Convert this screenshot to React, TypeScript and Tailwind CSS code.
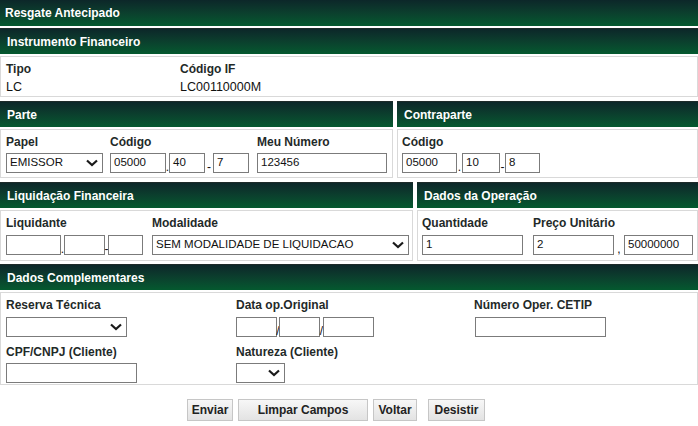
import React from 'react';

const font = { fontFamily: '"Liberation Sans", Arial, sans-serif' };

const Bar = ({ title, top = true }: { title: string; top?: boolean }) => (
    <div
        className={`h-[26px] flex items-center pl-[7px] text-white font-bold text-[12px] bg-gradient-to-b from-[#0c2729] to-[#04592f] ${top ? 'border-t border-[#1d2a29]' : ''}`}
    >
        {title}
    </div>
);

const Box = ({ children, className = '' }: { children: React.ReactNode; className?: string }) => (
    <div className={`mt-[2px] border border-[#d9d9d9] bg-white ${className}`}>{children}</div>
);

const Label = ({ children }: { children: React.ReactNode }) => (
    <div className="text-[12px] font-bold text-[#1f2a29] leading-[14px]">{children}</div>
);

const Input = ({ w, value = '' }: { w: number; value?: string }) => (
    <div
        className="h-[20px] border border-[#7b7b7b] bg-white flex items-center pl-[3px] text-[11.5px] text-[#111] shrink-0"
        style={{ width: w }}
    >
        {value}
    </div>
);

const Chevron = () => (
    <svg width="12" height="8" viewBox="0 0 12 8" className="shrink-0">
        <polyline points="1,1.5 6,6 11,1.5" fill="none" stroke="#1a1a1a" strokeWidth="2.2" />
    </svg>
);

const Select = ({ w, value = '' }: { w: number; value?: string }) => (
    <div
        className="h-[20px] border border-[#7b7b7b] bg-white flex items-center justify-between pl-[3px] pr-[4px] text-[11.5px] text-[#111] shrink-0"
        style={{ width: w }}
    >
        <span>{value}</span>
        <Chevron />
    </div>
);

// small "." / "-" / "/" between parts of a code, sitting at the bottom of the inputs
const Sep = ({ c, w }: { c: string; w: number }) => (
    <span className="h-[20px] flex items-end justify-center overflow-visible" style={{ width: w }}>
        <span className="text-[12px] leading-[12px] text-[#111]">{c}</span>
    </span>
);

const Btn = ({ children, w, className = '' }: { children: React.ReactNode; w: number; className?: string }) => (
    <button
        className={`h-[22px] border border-[#c6c6c6] bg-gradient-to-b from-[#f7f7f7] to-[#e3e3e3] text-[12px] font-bold text-[#222] ${className}`}
        style={{ width: w }}
    >
        {children}
    </button>
);

export default function App() {
    return (
        <div className="w-[698px] h-[426px] bg-white overflow-hidden" style={font}>
            <div className="h-[26px] flex items-center pl-[5px] text-white font-bold text-[12px] bg-gradient-to-b from-[#0c2729] to-[#04592f]">
                Resgate Antecipado
            </div>

            {/* Instrumento Financeiro */}
            <div className="mt-[2px]">
                <Bar title="Instrumento Financeiro" />
                <Box className="h-[41px] pt-[5px] pl-[5px]">
                    <div className="flex">
                        <div className="w-[174px]">
                            <Label>Tipo</Label>
                            <div className="text-[12.5px] text-[#111] mt-[2px]">LC</div>
                        </div>
                        <div>
                            <Label>Código IF</Label>
                            <div className="text-[12.5px] text-[#111] mt-[2px]">LC00110000M</div>
                        </div>
                    </div>
                </Box>
            </div>

            {/* Parte / Contraparte */}
            <div className="mt-[4px] flex gap-[4px]">
                <div className="w-[393px]">
                    <Bar title="Parte" />
                    <Box className="h-[49px] pt-[5px] pl-[5px]">
                        <div className="flex">
                            <div className="w-[104px]">
                                <Label>Papel</Label>
                                <div className="mt-[4px]"><Select w={97} value="EMISSOR" /></div>
                            </div>
                            <div className="w-[147px]">
                                <Label>Código</Label>
                                <div className="mt-[4px] flex">
                                    <Input w={56} value="05000" />
                                    <Sep c="." w={3} />
                                    <Input w={36} value="40" />
                                    <Sep c="-" w={8} />
                                    <Input w={36} value="7" />
                                </div>
                            </div>
                            <div>
                                <Label>Meu Número</Label>
                                <div className="mt-[4px]"><Input w={130} value="123456" /></div>
                            </div>
                        </div>
                    </Box>
                </div>
                <div className="flex-1">
                    <Bar title="Contraparte" />
                    <Box className="h-[49px] pt-[5px] pl-[4px]">
                        <Label>Código</Label>
                        <div className="mt-[4px] flex">
                            <Input w={55} value="05000" />
                            <Sep c="." w={5} />
                            <Input w={38} value="10" />
                            <Sep c="-" w={5} />
                            <Input w={35} value="8" />
                        </div>
                    </Box>
                </div>
            </div>

            {/* Liquidação / Dados da Operação */}
            <div className="mt-[4px] flex gap-[4px]">
                <div className="w-[413px]">
                    <Bar title="Liquidação Financeira" />
                    <Box className="h-[51px] pt-[5px] pl-[5px]">
                        <div className="flex">
                            <div className="w-[146px]">
                                <Label>Liquidante</Label>
                                <div className="mt-[5px] flex">
                                    <Input w={55} />
                                    <Sep c="." w={3} />
                                    <Input w={41} />
                                    <Sep c="-" w={3} />
                                    <Input w={35} />
                                </div>
                            </div>
                            <div>
                                <Label>Modalidade</Label>
                                <div className="mt-[5px]"><Select w={257} value="SEM MODALIDADE DE LIQUIDACAO" /></div>
                            </div>
                        </div>
                    </Box>
                </div>
                <div className="flex-1">
                    <Bar title="Dados da Operação" />
                    <Box className="h-[51px] pt-[5px] pl-[4px]">
                        <div className="flex">
                            <div className="w-[111px]">
                                <Label>Quantidade</Label>
                                <div className="mt-[5px]"><Input w={101} value="1" /></div>
                            </div>
                            <div>
                                <Label>Preço Unitário</Label>
                                <div className="mt-[5px] flex">
                                    <Input w={81} value="2" />
                                    <Sep c="," w={10} />
                                    <Input w={69} value="50000000" />
                                </div>
                            </div>
                        </div>
                    </Box>
                </div>
            </div>

            {/* Dados Complementares */}
            <div className="mt-[3px]">
                <Bar title="Dados Complementares" />
                <Box className="h-[93px] pt-[5px] pl-[5px]">
                    <div className="flex">
                        <div className="w-[230px]">
                            <Label>Reserva Técnica</Label>
                            <div className="mt-[5px]"><Select w={121} /></div>
                        </div>
                        <div className="w-[238px]">
                            <Label>Data op.Original</Label>
                            <div className="mt-[5px] flex">
                                <Input w={41} />
                                <Sep c="/" w={2} />
                                <Input w={41} />
                                <Sep c="/" w={3} />
                                <Input w={51} />
                            </div>
                        </div>
                        <div>
                            <Label>Número Oper. CETIP</Label>
                            <div className="mt-[5px] ml-[1px]"><Input w={131} /></div>
                        </div>
                    </div>
                    <div className="flex mt-[8px]">
                        <div className="w-[230px]">
                            <Label>CPF/CNPJ (Cliente)</Label>
                            <div className="mt-[4px]"><Input w={131} /></div>
                        </div>
                        <div>
                            <Label>Natureza (Cliente)</Label>
                            <div className="mt-[4px]"><Select w={49} /></div>
                        </div>
                    </div>
                </Box>
            </div>

            <div className="mt-[14px] flex pl-[187px]">
                <Btn w={46}>Enviar</Btn>
                <Btn w={130} className="ml-[5px]">Limpar Campos</Btn>
                <Btn w={44} className="ml-[5px]">Voltar</Btn>
                <Btn w={57} className="ml-[11px]">Desistir</Btn>
            </div>
        </div>
    );
}
